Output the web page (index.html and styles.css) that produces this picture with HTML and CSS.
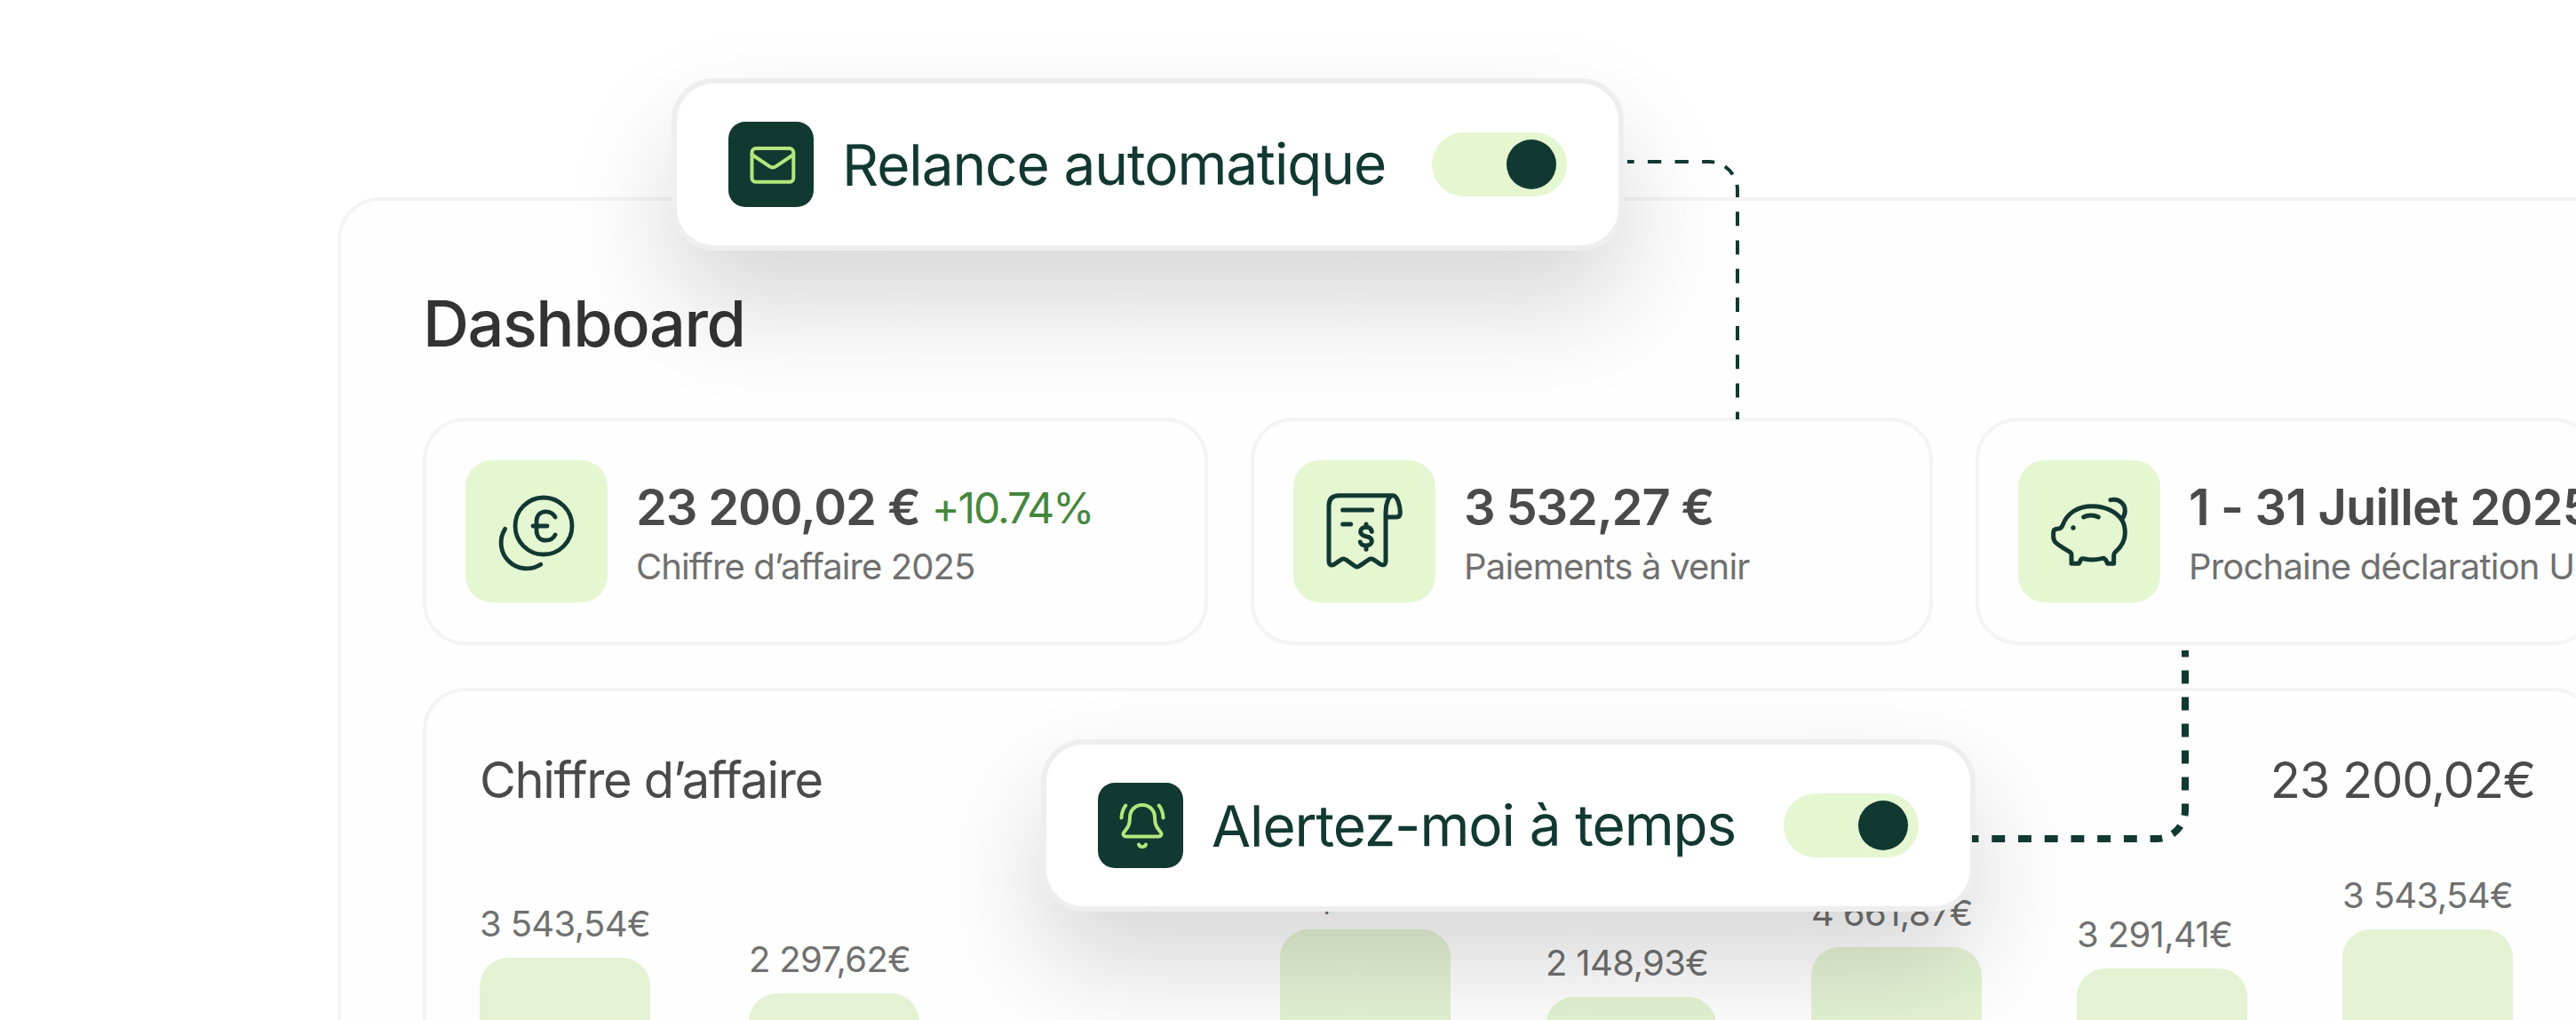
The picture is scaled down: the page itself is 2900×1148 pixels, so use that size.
FILE: index.html
```html
<!DOCTYPE html>
<html lang="fr">
<head>
  <meta charset="UTF-8">
  <meta name="viewport" content="width=device-width, initial-scale=1.0">
  <title>Dashboard</title>
  <link rel="stylesheet" href="styles.css">
</head>
<body>
  <div class="stage">
    <main class="panel">
      <h1>Dashboard</h1>

      <section class="cards">
        <div class="card card-revenue">
          <div class="card-icon">
            <svg viewBox="24 24 112 112" stroke-width="4.8">
              <circle cx="88" cy="74" r="32"/>
              <path d="M101 64C99 60 95.5 57.8 90.5 57.8C84 57.8 80 62.5 80 69V79C80 85.5 84 90.2 90.5 90.2C95.5 90.2 99 88 101 84M76 74H92"/>
              <path d="M44.6 77.4A29 29 0 0 0 84.8 117.3"/>
            </svg>
          </div>
          <div class="card-info">
            <div class="card-value"><span class="value">23 200,02 €</span><span class="trend">+10.74%</span></div>
            <div class="card-label">Chiffre d’affaire 2025</div>
          </div>
        </div>

        <div class="card card-payments">
          <div class="card-icon">
            <svg viewBox="0 6 336 336" stroke-width="15">
              <path d="M265 53H82C60 53 48 65 48 88V273C48 289 57 291 67 285L87 271C93 266 100 266 106 270L134 290C140 295 147 295 153 290L182 270C188 266 194 266 200 270L220 284C232 291 240 288 240 273V110C240 80 250 53 265 53C278 53 289 85 289 112C289 121 284 126 276 126H240"/>
              <path d="M95 102H194M95 150H122"/>
              <path d="M193 175C191 166 184 160 174 160C163 160 155 166 155 175C155 185 163 189 174 191C185 193 193 198 193 207C193 216 185 222 174 222C163 222 156 218 154 210M174 150V158M174 224V235"/>
            </svg>
          </div>
          <div class="card-info">
            <div class="card-value"><span class="value">3 532,27 €</span></div>
            <div class="card-label">Paiements à venir</div>
          </div>
        </div>

        <div class="card card-tax">
          <div class="card-icon">
            <svg viewBox="0 0 336 336" stroke-width="15">
              <path d="M277 128C286 140 289 157 289 174C289 200 275 222 256 238C251 243 251 246 251 250V277H230C227 270 225 263 219 260C216 258 213 259 210 260C190 265 168 265 152 261C148 260 144 259 141 262C138 266 136 272 133 277H108V246C108 241 104 238 100 236C75 221 47 208 47 188V172C47 162 53 160 60 160C70 160 75 157 78 148C93 106 130 83 178 83C220 83 258 100 277 128Z"/>
              <path d="M240 62C268 56 289 75 289 98C289 110 284 120 277 128"/>
              <path d="M149 120C163 112 185 112 199 120"/>
              <circle class="dot" cx="114" cy="156" r="8"/>
            </svg>
          </div>
          <div class="card-info">
            <div class="card-value"><span class="value">1 - 31 Juillet 2025</span></div>
            <div class="card-label">Prochaine déclaration U</div>
          </div>
        </div>
      </section>

      <section class="chart">
        <div class="chart-head">
          <span class="chart-title">Chiffre d’affaire</span>
          <span>23 200,02€</span>
        </div>
        <div class="bars">
          <div class="col"><span>3 543,54€</span><div class="bar" style="height:170px"></div></div>
          <div class="col"><span>2 297,62€</span><div class="bar" style="height:130px"></div></div>
          <div class="col"><div class="bar" style="height:0"></div></div>
          <div class="col"><span>48,93€</span><div class="bar" style="height:202px"></div></div>
          <div class="col"><span>2 148,93€</span><div class="bar" style="height:126px"></div></div>
          <div class="col"><span>4 661,87€</span><div class="bar" style="height:182px"></div></div>
          <div class="col"><span>3 291,41€</span><div class="bar" style="height:158px"></div></div>
          <div class="col"><span>3 543,54€</span><div class="bar" style="height:202px"></div></div>
        </div>
      </section>
    </main>

    <div class="popup popup-reminder">
      <div class="popup-icon">
        <svg viewBox="0 0 96 96">
          <rect x="26.5" y="30" width="46.8" height="37.8" rx="4.5"/>
          <path d="M26.5 37L47.2 50.8Q49.9 52.4 52.6 50.8L73.3 37"/>
        </svg>
      </div>
      <span class="popup-text">Relance automatique</span>
      <div class="toggle"></div>
    </div>

    <div class="popup popup-alert">
      <div class="popup-icon">
        <svg viewBox="0 0 96 96">
          <path d="M36 39C36 31 42 25 50 25C58 25 64 31 64 39C64 48 67 51 70.5 55.5C72.5 58 71 60.5 68.5 60.5H31.5C29 60.5 27.5 58 29.5 55.5C33 51 36 48 36 39Z"/>
          <path d="M46 69.5C47.5 73 52.5 73 54 69.5"/>
          <path d="M31.3 25.5Q26.8 31 26.5 39.5M68.7 25.5Q73.2 31 73.5 39.5"/>
        </svg>
      </div>
      <span class="popup-text">Alertez-moi à temps</span>
      <div class="toggle"></div>
    </div>

    <svg class="links" viewBox="0 0 2900 1148">
      <g stroke-width="4">
        <path d="M1832 182H1924" stroke-dasharray="15.3 15.3" stroke-dashoffset="7.65"/>
        <path d="M1924 182A32 32 0 0 1 1956 214" stroke-dasharray="12.6 12.6" stroke-dashoffset="6.3"/>
        <path d="M1956 214V472" stroke-dasharray="16.1 16.1" stroke-dashoffset="8"/>
      </g>
      <g stroke-width="8">
        <path d="M2220 944H2428" stroke-dasharray="14.86 14.86" stroke-dashoffset="7.4"/>
        <path d="M2428 944A32 32 0 0 0 2460 912" stroke-dasharray="12.6 12.6" stroke-dashoffset="6.3"/>
        <path d="M2460 912V732" stroke-dasharray="15 15" stroke-dashoffset="7.5"/>
      </g>
    </svg>
  </div>
</body>
</html>
```
FILE: styles.css
```css
* {
  box-sizing: border-box;
}
body {
  margin: 0;
  background: #fff;
  font-family: Inter, "Liberation Sans", sans-serif;
}
.stage {
  position: relative;
  width: 2900px;
  height: 1148px;
  padding: 222px 0 0 380px;
  overflow: hidden;
}
.panel {
  width: 2638px;
  height: 1200px;
  padding: 94px 92px 0;
  background: #fefefe;
  border: 4px solid #f4f4f4;
  border-radius: 48px;
}
h1 {
  margin: 0 0 62px;
  font-size: 72px;
  font-weight: 500;
  line-height: 88px;
  letter-spacing: -0.02em;
  color: #333;
}
.cards {
  display: flex;
  gap: 48px;
  margin-bottom: 48px;
}
.card {
  display: flex;
  align-items: center;
  gap: 32px;
  height: 256px;
  padding: 44px;
  border: 4px solid #f4f4f4;
  border-radius: 48px;
  white-space: nowrap;
}
.card-revenue {
  width: 884px;
}
.card-payments {
  width: 768px;
}
.card-tax {
  width: 698px;
}
.card-icon {
  display: flex;
  flex: none;
  align-items: center;
  justify-content: center;
  width: 160px;
  height: 160px;
  background: #e4f7d1;
  border-radius: 30px;
}
.card-icon svg {
  width: 112px;
  height: 112px;
  fill: none;
  stroke: #123832;
  stroke-linecap: round;
  stroke-linejoin: round;
}
.card-icon .dot {
  fill: #123832;
  stroke: none;
}
.card-value {
  display: flex;
  align-items: center;
  gap: 13px;
  height: 79px;
  line-height: 79px;
}
.value {
  font-size: 56px;
  font-weight: 600;
  letter-spacing: -0.02em;
  color: #4a4a4a;
}
.card-tax .value {
  letter-spacing: -0.015em;
}
.trend {
  font-size: 48px;
  letter-spacing: -0.043em;
  color: #44873c;
}
.card-label {
  font-size: 40px;
  line-height: 53px;
  letter-spacing: -0.02em;
  color: #707070;
}
.card-revenue .card-label {
  letter-spacing: -0.023em;
}
.chart {
  height: 600px;
  padding: 60px 64px 60px 60px;
  border: 4px solid #f4f4f4;
  border-radius: 48px;
}
.chart-head {
  display: flex;
  justify-content: space-between;
  font-size: 56px;
  line-height: 80px;
  letter-spacing: -0.02em;
  color: #4a4a4a;
}
.chart-title {
  letter-spacing: -0.024em;
}
.bars {
  display: flex;
  align-items: flex-end;
  gap: 107px;
  height: 330px;
}
.col {
  display: flex;
  flex-direction: column;
  flex: none;
  gap: 14px;
  width: 192px;
  font-size: 40px;
  line-height: 48px;
  letter-spacing: -0.016em;
  white-space: nowrap;
  color: #707070;
}
.col:first-child {
  width: 196px;
}
.bar {
  width: 192px;
  background: #e4f2d3;
  border-radius: 32px 32px 0 0;
}
.popup {
  position: absolute;
  display: flex;
  align-items: center;
  height: 194px;
  padding: 0 58px;
  background: #fff;
  border: 6px solid #eee;
  border-radius: 48px;
  box-shadow: 0 60px 120px rgba(0, 0, 0, 0.155);
}
.popup-reminder {
  left: 756px;
  top: 88px;
  width: 1072px;
}
.popup-alert {
  left: 1172px;
  top: 832px;
  width: 1052px;
}
.popup-icon {
  width: 96px;
  height: 96px;
  margin-right: 32px;
  background: #123832;
  border-radius: 19px;
}
.popup-icon svg {
  display: block;
  fill: none;
  stroke: #b3e67c;
  stroke-width: 4;
  stroke-linecap: round;
  stroke-linejoin: round;
}
.popup-text {
  font-size: 64px;
  line-height: 80px;
  letter-spacing: -0.018em;
  white-space: nowrap;
  color: #123832;
  transform: rotate(-0.17deg);
}
.toggle {
  display: flex;
  justify-content: flex-end;
  width: 152px;
  height: 72px;
  margin-left: auto;
  padding: 8px 12px;
  background: #e4f7d1;
  border-radius: 36px;
}
.toggle::after {
  content: "";
  width: 56px;
  height: 56px;
  background: #123832;
  border-radius: 50%;
}
.links {
  position: absolute;
  left: 0;
  top: 0;
  width: 2900px;
  height: 1148px;
  fill: none;
  stroke: #123832;
}
```
